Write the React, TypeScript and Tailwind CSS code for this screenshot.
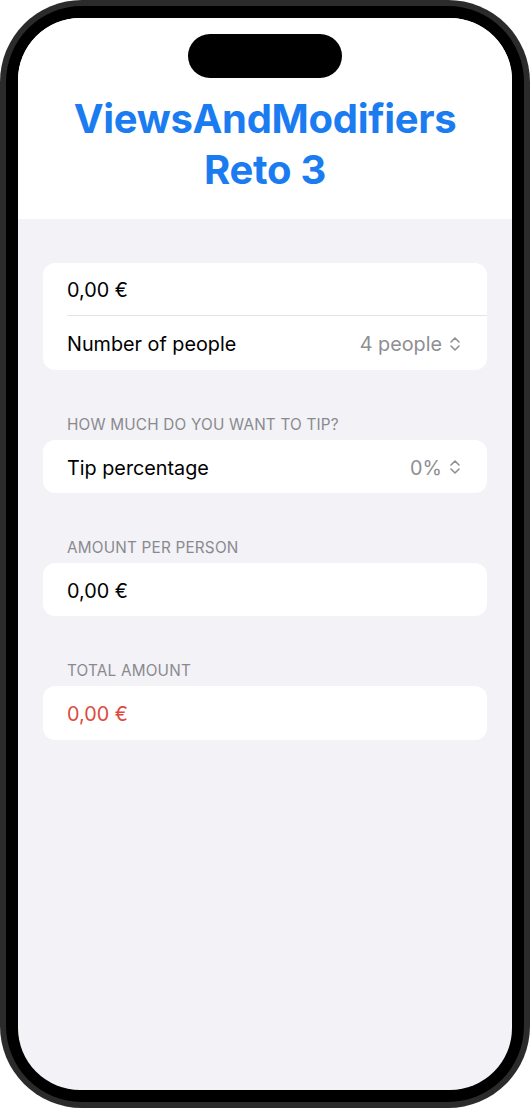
import { ReactNode } from "react";

const UpDown = () => (
  <svg width="12" height="18" viewBox="0 0 12 18" fill="none" className="ml-[7px] -mt-[3px]">
    <path d="M2 7 L6 3 L10 7" stroke="#8e8e93" strokeWidth="1.6" strokeLinecap="round" strokeLinejoin="round" />
    <path d="M2 11 L6 15 L10 11" stroke="#8e8e93" strokeWidth="1.6" strokeLinecap="round" strokeLinejoin="round" />
  </svg>
);

const Card = ({ children }: { children: ReactNode }) => (
  <div className="bg-white rounded-[12px] mx-[25px] overflow-hidden">{children}</div>
);

const Row = ({ children, last = true, h = "h-[53px]" }: { children: ReactNode; last?: boolean; h?: string }) => (
  <div className="pl-[24px]">
    <div className={`${h} flex items-center justify-between pr-[26px] pt-[4px] ${last ? "" : "border-b border-[#e3e3e8]"}`}>
      {children}
    </div>
  </div>
);

const SectionHeader = ({ title }: { title: string }) => (
  <div className="mx-[25px] pl-[24px] pt-[45px] pb-[5px] text-[15.3px] leading-[20px] text-[#8a8a8e] tracking-[0.2px]">
    {title}
  </div>
);

export default function App() {
  return (
    <div className="w-[530px] h-[1108px] bg-white" style={{ fontFamily: "Inter, 'Noto Sans', sans-serif" }}>
      <div className="w-[530px] h-[1108px] rounded-[82px] bg-[#2b2b2b] p-[6px]">
        <div className="w-full h-full rounded-[76px] bg-black p-[12px]">
          <div className="w-full h-full rounded-[62px] overflow-hidden bg-[#f2f2f7] flex flex-col">
            <div className="bg-white h-[201px] flex flex-col items-center">
              <div className="mt-[16px] w-[154px] h-[44px] rounded-full bg-black" />
              <h1 className="mt-[15px] text-center text-[40px] leading-[51px] font-bold text-[#1a7cf0] tracking-[-0.3px]">
                ViewsAndModifiers
                <br />
                Reto 3
              </h1>
            </div>

            <div className="pt-[44px] text-[19.8px] text-black">
              <Card>
                <Row last={false}>
                  <span>0,00 €</span>
                </Row>
                <Row h="h-[54px]">
                  <span>Number of people</span>
                  <span className="flex items-center text-[#8e8e93]">
                    4 people
                    <UpDown />
                  </span>
                </Row>
              </Card>

              <SectionHeader title="HOW MUCH DO YOU WANT TO TIP?" />
              <Card>
                <Row>
                  <span>Tip percentage</span>
                  <span className="flex items-center text-[#8e8e93]">
                    0%
                    <UpDown />
                  </span>
                </Row>
              </Card>

              <SectionHeader title="AMOUNT PER PERSON" />
              <Card>
                <Row>
                  <span>0,00 €</span>
                </Row>
              </Card>

              <SectionHeader title="TOTAL AMOUNT" />
              <Card>
                <Row h="h-[54px]">
                  <span className="text-[#dc4a3e]">0,00 €</span>
                </Row>
              </Card>
            </div>
          </div>
        </div>
      </div>
    </div>
  );
}
